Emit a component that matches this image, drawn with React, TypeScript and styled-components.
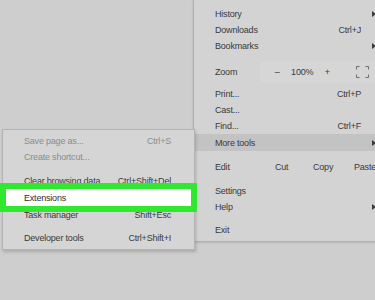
import styled, { createGlobalStyle } from 'styled-components';

const GlobalStyle = createGlobalStyle`
  html, body {
    margin: 0;
    padding: 0;
    background: #cecece;
    overflow: hidden;
  }
  body {
    font-family: 'Liberation Sans', Arial, sans-serif;
  }
`;

const Page = styled.div`
  position: relative;
  width: 375px;
  height: 300px;
  overflow: hidden;
  background: #cecece;
`;

const MainMenu = styled.div`
  margin-left: 193px;
  width: 200px;
  padding: 6px 0 3px;
  background: #d3d3d3;
  border-left: 1px solid #aeaeae;
  border-bottom: 1px solid #b0b0b0;
  box-shadow: 0 1px 2px rgba(0, 0, 0, 0.12);
  box-sizing: border-box;
`;

const Row = styled.div<{ $h?: number; $active?: boolean; $muted?: boolean }>`
  display: flex;
  align-items: center;
  height: ${(p) => p.$h ?? 16}px;
  padding: 0 8px 0 21px;
  font-size: 9px;
  letter-spacing: -0.2px;
  color: ${(p) => (p.$muted ? '#8c8c8c' : '#3a3a3a')};
  background: ${(p) => (p.$active ? '#c3c3c3' : 'transparent')};
`;

const Label = styled.span`
  flex: 1;
  white-space: nowrap;
`;

const Shortcut = styled.span`
  white-space: nowrap;
`;

const ArrowCol = styled.span`
  width: 24px;
  flex: none;
  display: flex;
  align-items: center;
  padding-left: 11px;
  box-sizing: border-box;
`;

const Arrow = styled.span`
  width: 0;
  height: 0;
  border-top: 3px solid transparent;
  border-bottom: 3px solid transparent;
  border-left: 4px solid #3a3a3a;
`;

const Gap = styled.div<{ $h: number }>`
  height: ${(p) => p.$h}px;
`;

const ZoomControls = styled.div`
  display: flex;
  align-items: center;
  height: 100%;
  margin-left: 23px;
  padding-left: 12px;
  background: #d6d6d6;
  flex: 1;
  margin-right: -8px;
`;

const ZoomBtn = styled.span<{ $w: number }>`
  width: ${(p) => p.$w}px;
  text-align: center;
  white-space: nowrap;
`;

const IconSlot = styled.span`
  display: flex;
  margin-left: 24px;
`;

const EditBtn = styled.span<{ $w: number }>`
  width: ${(p) => p.$w}px;
  flex: none;
  white-space: nowrap;
`;

const SubMenu = styled.div`
  position: absolute;
  left: 2px;
  top: 129px;
  width: 193px;
  padding: 3px 0 3px;
  background: #d5d5d5;
  border: 1px solid #b4b4b4;
  box-shadow: 1px 2px 3px rgba(0, 0, 0, 0.18);
  box-sizing: border-box;
`;

const SubRow = styled(Row)`
  padding: 0 23px 0 21px;
`;

const HighlightRow = styled(SubRow)`
  position: relative;
  z-index: 1;
  margin: 0 3px;
  padding-left: 18px;
  background: #ffffff;
  color: #2e2e2e;
  outline: 6px solid #2fe82f;
`;

const FullscreenIcon = () => (
  <svg width="13" height="12" viewBox="0 0 13 12" fill="none" stroke="#6a6a6a" strokeWidth="1">
    <path d="M0.5 3.5V0.5H3.5M9.5 0.5H12.5V3.5M12.5 8.5V11.5H9.5M3.5 11.5H0.5V8.5" />
  </svg>
);

export default function App() {
  return (
    <Page>
      <GlobalStyle />
      <MainMenu>
        <Row>
          <Label>History</Label>
          <ArrowCol>
            <Arrow />
          </ArrowCol>
        </Row>
        <Row>
          <Label>Downloads</Label>
          <Shortcut>Ctrl+J</Shortcut>
          <ArrowCol />
        </Row>
        <Row>
          <Label>Bookmarks</Label>
          <ArrowCol>
            <Arrow />
          </ArrowCol>
        </Row>
        <Gap $h={8} />
        <Row $h={20}>
          <span>Zoom</span>
          <ZoomControls>
            <ZoomBtn $w={10}>–</ZoomBtn>
            <ZoomBtn $w={40}>100%</ZoomBtn>
            <ZoomBtn $w={10}>+</ZoomBtn>
            <IconSlot>
              <FullscreenIcon />
            </IconSlot>
          </ZoomControls>
        </Row>
        <Gap $h={4} />
        <Row>
          <Label>Print...</Label>
          <Shortcut>Ctrl+P</Shortcut>
          <ArrowCol />
        </Row>
        <Row>
          <Label>Cast...</Label>
        </Row>
        <Row>
          <Label>Find...</Label>
          <Shortcut>Ctrl+F</Shortcut>
          <ArrowCol />
        </Row>
        <Row $active $h={17}>
          <Label>More tools</Label>
          <ArrowCol>
            <Arrow />
          </ArrowCol>
        </Row>
        <Gap $h={8} />
        <Row>
          <EditBtn $w={60}>Edit</EditBtn>
          <EditBtn $w={38}>Cut</EditBtn>
          <EditBtn $w={41}>Copy</EditBtn>
          <EditBtn $w={22}>Paste</EditBtn>
        </Row>
        <Gap $h={8} />
        <Row>
          <Label>Settings</Label>
        </Row>
        <Row>
          <Label>Help</Label>
          <ArrowCol>
            <Arrow />
          </ArrowCol>
        </Row>
        <Gap $h={7} />
        <Row>
          <Label>Exit</Label>
        </Row>
      </MainMenu>

      <SubMenu>
        <SubRow $muted>
          <Label>Save page as...</Label>
          <Shortcut>Ctrl+S</Shortcut>
        </SubRow>
        <SubRow $muted>
          <Label>Create shortcut...</Label>
        </SubRow>
        <Gap $h={7} />
        <SubRow $h={17}>
          <Label>Clear browsing data...</Label>
          <Shortcut>Ctrl+Shift+Del</Shortcut>
        </SubRow>
        <HighlightRow $h={17}>
          <Label>Extensions</Label>
        </HighlightRow>
        <SubRow $h={17}>
          <Label>Task manager</Label>
          <Shortcut>Shift+Esc</Shortcut>
        </SubRow>
        <Gap $h={7} />
        <SubRow>
          <Label>Developer tools</Label>
          <Shortcut>Ctrl+Shift+I</Shortcut>
        </SubRow>
      </SubMenu>
    </Page>
  );
}
